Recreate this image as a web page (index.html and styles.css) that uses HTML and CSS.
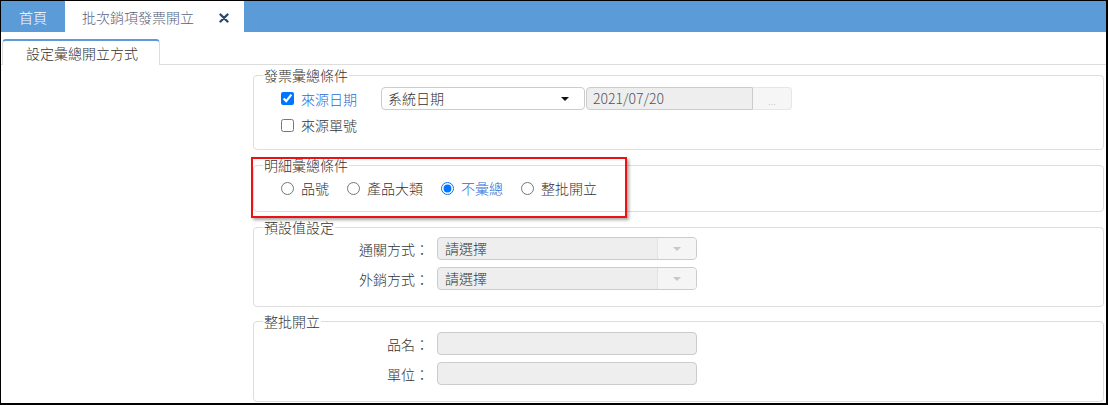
FILE: index.html
```html
<!DOCTYPE html>
<html lang="zh-Hant">
<head>
<meta charset="utf-8">
<title>批次銷項發票開立</title>
<link rel="stylesheet" href="styles.css">
</head>
<body>
<div class="frame">
  <div class="topbar">
    <div class="tab home">首頁</div>
    <div class="tab active">
      <span class="tab-title">批次銷項發票開立</span>
      <svg class="close" width="10" height="10" viewBox="0 0 10 10"><path d="M1.5 1.5 L8.5 8.5 M8.5 1.5 L1.5 8.5" stroke="#2d4a6d" stroke-width="2.4" stroke-linecap="round"/></svg>
    </div>
  </div>
  <div class="subtabs">
    <div class="subtab">設定彙總開立方式</div>
  </div>
  <div class="main">
    <div class="side"></div>
    <div class="content">
      <fieldset class="fs fs1">
        <legend>發票彙總條件</legend>
        <div class="row row-first">
          <label class="chk on"><input type="checkbox" checked>來源日期</label>
          <div class="select">系統日期<span class="caret"></span></div>
          <div class="datebox">2021/07/20</div>
          <div class="dots">...</div>
        </div>
        <div class="row row-second">
          <label class="chk"><input type="checkbox">來源單號</label>
        </div>
      </fieldset>

      <fieldset class="fs fs2">
        <legend>明細彙總條件</legend>
        <div class="radios">
          <label class="rad"><input type="radio" name="d">品號</label>
          <label class="rad"><input type="radio" name="d">產品大類</label>
          <label class="rad on"><input type="radio" name="d" checked>不彙總</label>
          <label class="rad"><input type="radio" name="d">整批開立</label>
        </div>
      </fieldset>

      <fieldset class="fs fs3">
        <legend>預設值設定</legend>
        <div class="form-grid">
          <div class="flabel">通關方式：</div>
          <div class="dsel"><span class="dsel-text">請選擇</span><span class="dsel-btn"><span class="dcaret"></span></span></div>
          <div class="flabel">外銷方式：</div>
          <div class="dsel"><span class="dsel-text">請選擇</span><span class="dsel-btn"><span class="dcaret"></span></span></div>
        </div>
      </fieldset>

      <fieldset class="fs fs4">
        <legend>整批開立</legend>
        <div class="form-grid">
          <div class="flabel">品名：</div>
          <div class="dinput"></div>
          <div class="flabel">單位：</div>
          <div class="dinput"></div>
        </div>
      </fieldset>
    </div>
    <div class="highlight"></div>
  </div>
</div>
</body>
</html>
```
FILE: styles.css
```css
* { box-sizing: border-box; }
html, body { margin: 0; padding: 0; background: #fff; }
body {
  font-family: "Noto Sans CJK TC", "Noto Sans", sans-serif;
  font-size: 14px;
  font-weight: 300;
  color: #333;
}
.frame {
  position: relative;
  width: 1108px;
  height: 405px;
  border: 1px solid #000;
  border-right-width: 2px;
  border-bottom-width: 2px;
  overflow: hidden;
  background: #fff;
}
.topbar {
  display: flex;
  height: 31px;
  background: #5b9bd8;
}
.tab {
  display: flex;
  align-items: center;
  height: 31px;
  font-size: 14px;
  line-height: 16px;
}
.tab.home {
  width: 64px;
  justify-content: center;
  color: #fff;
}
.tab.active {
  width: 179px;
  background: #fff;
  padding-left: 17px;
  color: #55627a;
}
.tab-title { width: 112px; white-space: nowrap; }
.close { margin-left: 25px; margin-top: 3px; }

.subtabs {
  display: flex;
  align-items: flex-end;
  height: 33px;
  border-bottom: 1px solid #ddd;
}
.subtab {
  margin-left: 1px;
  margin-bottom: -1px;
  height: 26px;
  width: 158px;
  padding-left: 23px;
  border-top: 2px solid #5b9bd8;
  border-left: 1px solid #ddd;
  border-right: 1px solid #ddd;
  border-radius: 4px 4px 0 0;
  background: #fff;
  line-height: 24px;
  color: #333;
  white-space: nowrap;
}

.main {
  display: flex;
  align-items: flex-start;
}
.side { width: 252px; flex: none; }
.content {
  width: 851px;
  flex: none;
  display: flex;
  flex-direction: column;
}
.fs {
  margin: 0;
  min-width: 0;
  border: 1px solid #ddd;
  border-radius: 4px;
  padding: 0 9px;
}
.fs legend {
  padding: 0 1px;
  font-size: 14px;
  line-height: 16px;
  color: #333;
}
.fs1 { margin-top: 2px; padding-top: 4px; padding-bottom: 13px; }
.fs2 { margin-top: 7px; padding-top: 5px; padding-bottom: 13px; }
.fs3 { margin-top: 7px; padding-top: 2px; padding-bottom: 16px; }
.fs4 { margin-top: 6px; padding-top: 3px; padding-bottom: 16px; }

.row {
  display: flex;
  align-items: center;
  margin-left: 18px;
}
.row-first { height: 23px; }
.row-second { height: 22px; margin-top: 4px; }

.chk, .rad {
  display: flex;
  align-items: center;
  line-height: 16px;
  white-space: nowrap;
}
.chk { width: 100px; }
.chk input, .rad input {
  margin: 0 7px 0 0;
  width: 13px;
  height: 13px;
}
.on { color: #2b6ad6; }

.select {
  position: relative;
  width: 204px;
  height: 23px;
  border: 1px solid #ccc;
  border-radius: 4px;
  padding-left: 6px;
  line-height: 21px;
  color: #333;
  background: #fff;
}
.caret {
  position: absolute;
  right: 15px;
  top: 9px;
  width: 0;
  height: 0;
  border-left: 4px solid transparent;
  border-right: 4px solid transparent;
  border-top: 4px solid #111;
}
.datebox {
  margin-left: 1px;
  width: 167px;
  height: 23px;
  border: 1px solid #ccc;
  border-radius: 4px 0 0 4px;
  background: #eee;
  padding-left: 6px;
  line-height: 21px;
  color: #555;
}
.dots {
  width: 39px;
  height: 23px;
  border: 1px solid #e6e6e6;
  border-left: none;
  border-radius: 0 4px 4px 0;
  background: #f6f6f6;
  color: #c4c4c4;
  font-size: 10px;
  line-height: 26px;
  text-align: center;
}

.radios {
  display: flex;
  align-items: center;
  height: 20px;
  margin-left: 18px;
  gap: 18px;
}

.form-grid {
  display: grid;
  grid-template-columns: 166px 260px;
  column-gap: 8px;
  row-gap: 7px;
  align-items: center;
}
.flabel {
  text-align: right;
  line-height: 16px;
  color: #333;
  white-space: nowrap;
}
.dsel {
  display: flex;
  height: 23px;
  border: 1px solid #ccc;
  border-radius: 4px;
  background: #eee;
  overflow: hidden;
}
.dsel-text {
  flex: 1;
  padding-left: 7px;
  line-height: 21px;
  color: #333;
}
.dsel-btn {
  width: 39px;
  display: flex;
  align-items: center;
  justify-content: center;
  background: #f5f5f5;
  border-left: 1px solid #e2e2e2;
}
.dcaret {
  width: 0;
  height: 0;
  border-left: 4px solid transparent;
  border-right: 4px solid transparent;
  border-top: 4px solid #c8c8c8;
}
.dinput {
  height: 23px;
  border: 1px solid #ccc;
  border-radius: 4px;
  background: #eee;
}

.highlight {
  position: absolute;
  left: 250px;
  top: 156px;
  width: 376px;
  height: 61px;
  border: 2px solid #ee1111;
  box-shadow: 2px 2px 3px rgba(0, 0, 0, 0.35);
  pointer-events: none;
}
```
